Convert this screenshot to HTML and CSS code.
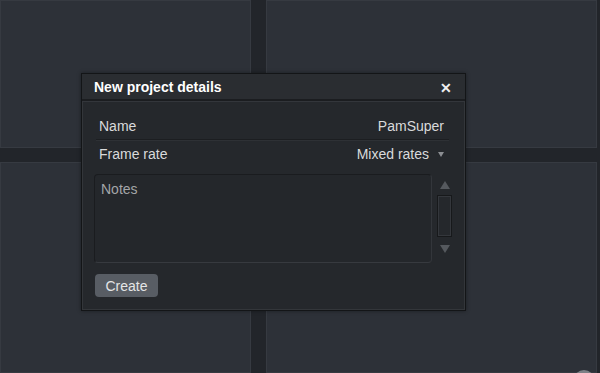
FILE: index.html
```html
<!DOCTYPE html>
<html lang="en">
<head>
  <meta charset="UTF-8">
  <title>New project details</title>
  <link rel="stylesheet" href="styles.css">
</head>
<body>

<div class="panels">
  <div class="panel"></div>
  <div class="panel"></div>
  <div class="panel"></div>
  <div class="panel"></div>
</div>

<div class="corner-btn"></div>

<div class="dialog">
  <div class="dialog-title">
    <span>New project details</span>
    <span class="close">&#x2715;</span>
  </div>
  <div class="dialog-body">
    <div class="row">
      <span>Name</span>
      <span>PamSuper</span>
    </div>
    <div class="row">
      <span>Frame rate</span>
      <span class="select">Mixed rates <span class="caret"></span></span>
    </div>
    <div class="notes-wrap">
      <div class="notes">Notes</div>
      <div class="scroll">
        <span class="arrow up"></span>
        <span class="track"></span>
        <span class="arrow down"></span>
      </div>
    </div>
    <button class="create">Create</button>
  </div>
</div>

</body>
</html>
```

FILE: styles.css
```css
body { margin: 0; background: #22252a; font-family: "Liberation Sans", Arial, sans-serif; color: #d6d7d8; overflow: hidden; }
.panels {
  display: grid; grid-template-columns: 251px 1fr; grid-template-rows: 148px 211px;
  gap: 14px 15px; width: 597px; height: 373px;
}
.panel { background: #2d3138; border: 1px solid #363a41; box-sizing: border-box; }
.corner-btn {
  position: absolute; right: 6px; bottom: -16px; width: 20px; height: 19px;
  border-radius: 50%; background: #7d8086;
}
.dialog {
  position: absolute; left: 81px; top: 73px; width: 383px; height: 236px;
  background: #25282c; border: 1px solid #131517;
  box-shadow: inset 0 0 0 1px #33363a, 0 0 4px rgba(0,0,0,0.4);
}
.dialog-title {
  display: flex; justify-content: space-between; align-items: center;
  height: 25px; padding: 0 13px 0 12px; background: #2a2d31;
  border-bottom: 2px solid #1b1d20; box-shadow: 0 1px 0 #33363b;
  color: #fff; font-weight: bold; font-size: 14px;
}
.close { font-size: 14px; font-weight: bold; color: #f0f0f0; margin-top: 2px; }
.dialog-body { padding: 12px 11px 0 12px; }
.row {
  display: flex; justify-content: space-between; align-items: center;
  height: 26px; margin: 0 5px 0 2px; padding: 0 5px 0 3px;
  font-size: 14px; color: #d9dadb;
}
.row:first-child { border-bottom: 1px solid #1c1e21; box-shadow: 0 1px 0 #2e3135; }
.row:nth-child(2) { height: 28px; }
.select { display: flex; align-items: center; }
.caret {
  width: 0; height: 0; margin-left: 9px; margin-right: 0;
  border-left: 3px solid transparent; border-right: 3px solid transparent;
  border-top: 5px solid #8b8e92;
}
.notes-wrap { display: flex; gap: 4px; margin-top: 6px; }
.notes {
  width: 338px; height: 89px; box-sizing: border-box; padding: 6px 6px;
  background: #24272b; border: 1px solid #1a1c1f; border-bottom-color: #373a3f; border-right-color: #33363b;
  border-radius: 4px; font-size: 14px; color: #a3a5a8;
}
.scroll { display: flex; flex-direction: column; align-items: center; width: 17px; padding-top: 7px; }
.arrow { width: 0; height: 0; border-left: 5px solid transparent; border-right: 5px solid transparent; }
.arrow.up { border-bottom: 8px solid #55595e; }
.arrow.down { border-top: 8px solid #55595e; }
.track {
  width: 15px; height: 42px; box-sizing: border-box; margin: 6px 0 8px;
  border: 1px solid #17191b; box-shadow: inset 0 0 0 1px #34373c;
}
.create {
  margin: 11px 0 0 1px; width: 63px; height: 23px; padding: 0;
  background: #585d64; color: #e4e5e6; border: none; border-radius: 4px;
  font-family: inherit; font-size: 14px;
}
```
